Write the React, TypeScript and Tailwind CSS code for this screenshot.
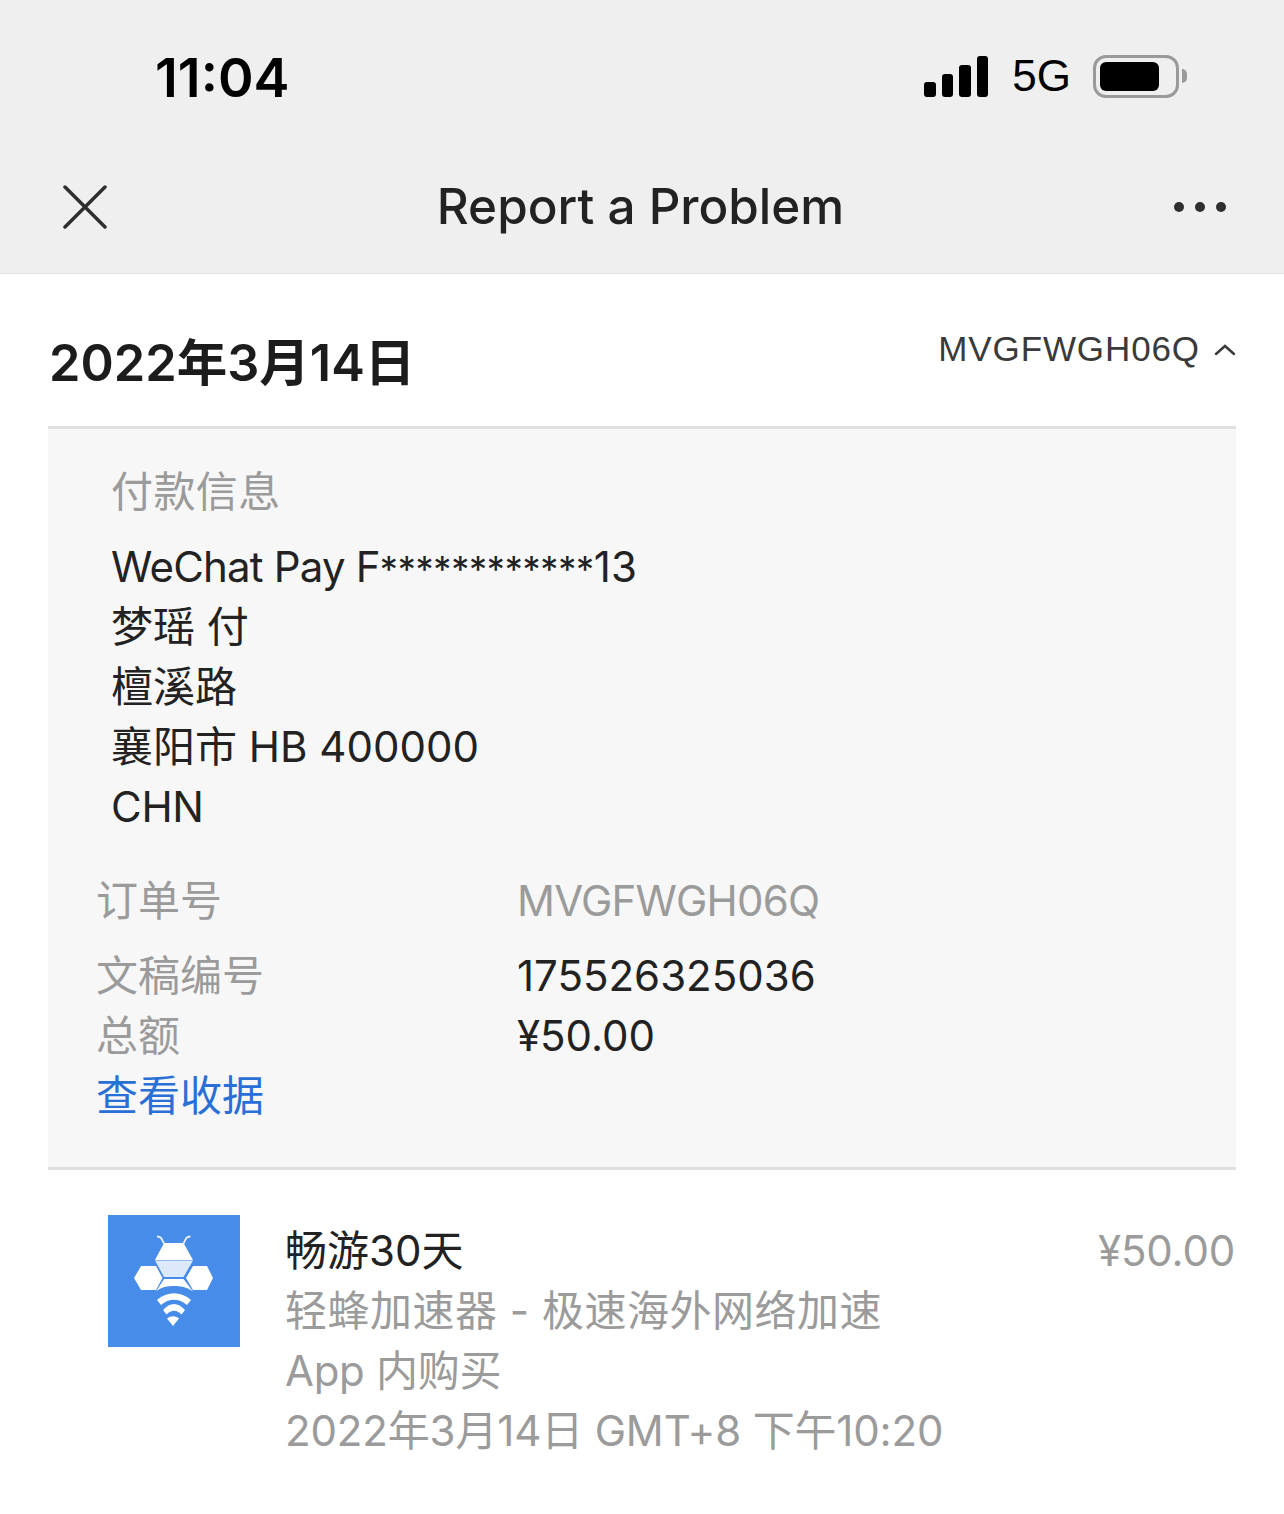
const sans = "font-['Inter','Noto_Sans_CJK_SC',sans-serif]"

function BeeLogo() {
  return (
    <svg viewBox="0 0 132 132" className="h-[132px] w-[132px]">
      <rect width="132" height="132" fill="#478ce8" />
      {/* antennae */}
      <path d="M49 21.500c3 0 4 .5 5 3l2 4M82.500 21.500c-3 0-4 .5-5 3l-2 4" stroke="#e4eefc" strokeWidth="1.800" fill="none" />
      {/* head */}
      <path d="M56 28h19.500L85 45H47z" fill="#fff" />
      <path d="M47 45.500h38L75.500 62H56z" fill="#dce9fb" />
      {/* wings */}
      <path d="M33 51h15l6.500 12L48 75H33l-7-12z" fill="#fff" />
      <path d="M85 51h14l6 12-6 12H85l-7-12z" fill="#fff" />
      {/* wifi arcs */}
      <path d="M56 64h19.500L85 76.500C79 72 72 71 66 71s-13 1-18 5.500z" fill="#fff" />
      <path d="M49 85c10-9 24-9 34 0l-4 5c-8-7-18-7-26 0z" fill="#fff" />
      <path d="M55 95c7-8 15-8 22 0l-3.500 4.500c-5-5-10-5-15 0z" fill="#fff" />
      <path d="M59 103.500c4-3 8-3 12 0l-6 7.500z" fill="#fff" />
    </svg>
  )
}

function StatusIcons() {
  return (
    <div className="flex items-center">
      <div className="flex items-end gap-[6px]">
        <div className="h-[15px] w-[12px] rounded-[3px] bg-black" />
        <div className="h-[23px] w-[11px] rounded-[3px] bg-black" />
        <div className="h-[32px] w-[12px] rounded-[3px] bg-black" />
        <div className="h-[41px] w-[11px] rounded-[3px] bg-black" />
      </div>
      <span className="ml-[24px] text-[44px] leading-none text-black font-['Liberation_Sans',sans-serif]">5G</span>
      <div className="ml-[22px] flex items-center">
        <div className="flex h-[43px] w-[86px] items-center rounded-[13px] border-[3px] border-[#9a9a9a] p-[4px]">
          <div className="h-[29px] w-[59px] rounded-[6px] bg-black" />
        </div>
        <div className="ml-[3px] h-[14px] w-[5px] rounded-r-full bg-[#9a9a9a]" />
      </div>
    </div>
  )
}

function Header() {
  return (
    <div className="h-[274px] border-b border-[#e3e3e3] bg-[#efefef]">
      <div className="flex h-[152px] items-center justify-between pl-[155px] pr-[97px]">
        <span className="pt-[4px] text-[54px] leading-none font-semibold text-black">11:04</span>
        <StatusIcons />
      </div>
      <div className="flex h-[110px] items-center justify-between pl-[63px] pr-[58px]">
        <svg viewBox="0 0 44 44" className="h-[44px] w-[44px]" fill="none" stroke="#2e2e2e" strokeWidth="3.5" strokeLinecap="round">
          <path d="M2 2l40 40M42 2L2 42" />
        </svg>
        <span className="text-[49.400px] leading-none font-medium text-[#222]">Report a Problem</span>
        <div className="flex gap-[11px]">
          <div className="h-[10px] w-[10px] rounded-full bg-[#2e2e2e]" />
          <div className="h-[10px] w-[10px] rounded-full bg-[#2e2e2e]" />
          <div className="h-[10px] w-[10px] rounded-full bg-[#2e2e2e]" />
        </div>
      </div>
    </div>
  )
}

function PaymentPanel() {
  return (
    <div className="h-[744px] border-y-[3px] border-[#e0e0e0] bg-[#f7f7f8] pl-[48px] pt-[33px] text-[42px] leading-[60px]">
      <div className="pl-[15px]">
        <div className="text-[#9b9b9b] tracking-[0.4px]">付款信息</div>
        <div className="mt-[15px] text-[#222]">
          <div className="h-[60px]">
            <span className="tracking-[-0.8px]">WeChat Pay F</span>
            <span className="text-[36px] tracking-[-0.2px]">************</span>
            <span>13</span>
          </div>
          <div>梦瑶 付</div>
          <div>檀溪路</div>
          <div>襄阳市 HB 400000</div>
          <div className="tracking-[-0.3px]">CHN</div>
        </div>
      </div>
      <div className="mt-[34px] grid grid-cols-[421px_1fr] text-[#9b9b9b]">
        <div>订单号</div>
        <div className="tracking-[-0.8px]">MVGFWGH06Q</div>
      </div>
      <div className="mt-[15px] grid grid-cols-[421px_1fr]">
        <div className="text-[#9b9b9b]">文稿编号</div>
        <div className="text-[#222]">175526325036</div>
        <div className="text-[#9b9b9b]">总额</div>
        <div className="text-[#222]">¥50.00</div>
        <div className="text-[#2a6fd6]">查看收据</div>
      </div>
    </div>
  )
}

function ProductRow() {
  return (
    <div className="mt-[45px] flex pl-[60px] text-[42px] leading-[60px]">
      <BeeLogo />
      <div className="ml-[45px] flex-1 mt-[6px]">
        <div className="flex justify-between">
          <span className="text-[#222]">畅游30天</span>
          <span className="text-[#9b9b9b] pr-[1px] tracking-[-0.2px]">¥50.00</span>
        </div>
        <div className="text-[#9b9b9b]">
          <div className="tracking-[0.5px]">轻蜂加速器 - 极速海外网络加速</div>
          <div className="tracking-[-0.3px]">App 内购买</div>
          <div className="tracking-[-0.15px]">2022年3月14日 GMT+8 下午10:20</div>
        </div>
      </div>
    </div>
  )
}

export default function App() {
  return (
    <div className={`h-[1514px] w-[1284px] overflow-hidden bg-white ${sans}`}>
      <Header />
      <div className="px-[48px]">
        <div className="flex h-[152px] justify-between">
          <h1 className="ml-[1px] pt-[59px] text-[50.500px] leading-[60px] font-semibold text-[#1c1c1c]">2022年3月14日</h1>
          <div className="flex items-center gap-[14px] self-start pt-[45px] text-[#3a3a3a]">
            <span className="text-[35px] leading-[60px] tracking-[0.9px] font-['Liberation_Sans',sans-serif]">MVGFWGH06Q</span>
            <svg viewBox="0 0 22 14" className="h-[14px] w-[22px]" fill="none" stroke="#3a3a3a" strokeWidth="2.500" strokeLinecap="round">
              <path d="M2 12l9-8 9 8" />
            </svg>
          </div>
        </div>
        <PaymentPanel />
        <ProductRow />
      </div>
    </div>
  )
}
